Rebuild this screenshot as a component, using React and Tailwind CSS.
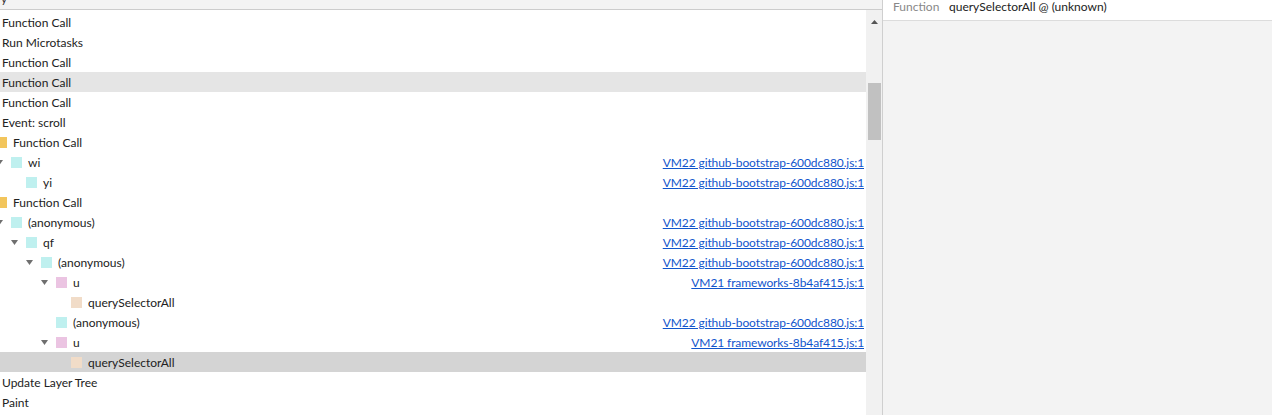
const rows = [
  { text: "Function Call" },
  { text: "Run Microtasks" },
  { text: "Function Call" },
  { text: "Function Call", hover: true },
  { text: "Function Call" },
  { text: "Event: scroll" },
  { text: "Function Call", depth: 0, color: "bg-[#f2c55c]" },
  { text: "wi", depth: 1, color: "bg-[#bff0ef]", arrow: true, link: "VM22 github-bootstrap-600dc880.js:1" },
  { text: "yi", depth: 2, color: "bg-[#bff0ef]", link: "VM22 github-bootstrap-600dc880.js:1" },
  { text: "Function Call", depth: 0, color: "bg-[#f2c55c]" },
  { text: "(anonymous)", depth: 1, color: "bg-[#bff0ef]", arrow: true, link: "VM22 github-bootstrap-600dc880.js:1" },
  { text: "qf", depth: 2, color: "bg-[#bff0ef]", arrow: true, link: "VM22 github-bootstrap-600dc880.js:1" },
  { text: "(anonymous)", depth: 3, color: "bg-[#bff0ef]", arrow: true, link: "VM22 github-bootstrap-600dc880.js:1" },
  { text: "u", depth: 4, color: "bg-[#ebc4e2]", arrow: true, link: "VM21 frameworks-8b4af415.js:1" },
  { text: "querySelectorAll", depth: 5, color: "bg-[#f1dcc8]" },
  { text: "(anonymous)", depth: 4, color: "bg-[#bff0ef]", link: "VM22 github-bootstrap-600dc880.js:1" },
  { text: "u", depth: 4, color: "bg-[#ebc4e2]", arrow: true, link: "VM21 frameworks-8b4af415.js:1" },
  { text: "querySelectorAll", depth: 5, color: "bg-[#f1dcc8]", selected: true },
  { text: "Update Layer Tree" },
  { text: "Paint" },
];

const indent = {
  0: "-ml-[19px]",
  1: "-ml-[4px]",
  2: "ml-[11px]",
  3: "ml-[26px]",
  4: "ml-[41px]",
  5: "ml-[56px]",
};

function Arrow() {
  return (
    <svg width="7" height="5" viewBox="0 0 7 5" className="block">
      <path d="M0 0 L7 0 L3.5 5 Z" fill="#6f6f6f" />
    </svg>
  );
}

function Row({ row }) {
  const bg = row.selected ? "bg-[#d4d4d4]" : row.hover ? "bg-[#e5e5e5]" : "";
  return (
    <div className={`h-[20px] flex items-center whitespace-nowrap ${bg}`}>
      {row.depth === undefined ? (
        <span className="pl-[2px] pt-[2px]">{row.text}</span>
      ) : (
        <div className={`flex items-center ${indent[row.depth]}`}>
          <div className="w-[15px] flex items-center">{row.arrow && <Arrow />}</div>
          <div className={`w-[11px] h-[11px] ${row.color}`} />
          <span className="ml-[6px] pt-[2px]">{row.text}</span>
        </div>
      )}
      {row.link && (
        <a className="ml-auto pr-[2px] pt-[2px] tracking-[-0.1px] text-[#1155cc] underline underline-offset-[1px]">
          {row.link}
        </a>
      )}
    </div>
  );
}

export default function App() {
  return (
    <div className="w-[1272px] h-[415px] flex overflow-hidden bg-white text-[12px] text-[#222] font-['Lato','Noto_Sans',sans-serif]">
      <div className="w-[883px] flex flex-col border-r border-[#cfcfcf]">
        <div className="h-[10px] shrink-0 bg-[#f3f3f3] border-b border-[#cccccc] overflow-hidden">
          <div className="-mt-[11px] pl-[1px] leading-[20px] text-[#333]">y</div>
        </div>
        <div className="flex flex-1 min-h-0">
          <div className="flex-1 pt-[2px] overflow-hidden">
            {rows.map((r, i) => (
              <Row key={i} row={r} />
            ))}
          </div>
          <div className="w-[16px] bg-[#f1f1f1] flex flex-col items-center">
            <div className="h-[14px] flex items-end">
              <svg width="7" height="4" viewBox="0 0 7 4">
                <path d="M0 4 L7 4 L3.5 0 Z" fill="#555" />
              </svg>
            </div>
            <div className="mt-[59px] w-[13px] h-[57px] bg-[#c1c1c1]" />
          </div>
        </div>
      </div>
      <div className="flex-1 flex flex-col bg-[#f3f3f3]">
        <div className="h-[21px] shrink-0 bg-white border-b border-[#dcdcdc] flex items-start pl-[10px] leading-[14px] whitespace-nowrap">
          <span className="text-[#888] w-[56px]">Function</span>
          <span className="text-[#222]">querySelectorAll @ (unknown)</span>
        </div>
      </div>
    </div>
  );
}
